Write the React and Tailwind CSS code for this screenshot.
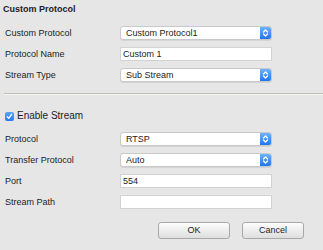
import React from "react";

function Chevrons() {
  return (
    <svg width="7" height="10" viewBox="0 0 7 10" fill="none" stroke="white" strokeWidth="1.2" strokeLinecap="round" strokeLinejoin="round">
      <path d="M1.5 4 L3.5 2 L5.5 4" />
      <path d="M1.5 6 L3.5 8 L5.5 6" />
    </svg>
  );
}

function Select({ value }) {
  return (
    <div className="w-[152px] h-[14px] flex items-stretch rounded-[3px] bg-white border border-[#c9c9c9] shadow-[0_1px_0_rgba(0,0,0,0.08)] overflow-hidden">
      <div className="flex-1 pl-[5px] flex items-center leading-none">{value}</div>
      <div className="w-[11px] flex items-center justify-center bg-gradient-to-b from-[#6fb2fb] to-[#1f74ef]">
        <Chevrons />
      </div>
    </div>
  );
}

function Input({ value }) {
  return (
    <div className="w-[152px] h-[14px] flex items-center bg-white border border-[#d2d2d2] pl-[2px] leading-none">
      {value}
    </div>
  );
}

function Row({ label, children }) {
  return (
    <div className="h-[14px] flex items-center">
      <div className="w-[115px] leading-none">{label}</div>
      {children}
    </div>
  );
}

export default function App() {
  return (
    <div
      className="w-[323px] h-[250px] bg-[#e6e6e6] text-[9px] text-[#1c1c1c] overflow-hidden flex flex-col"
      style={{ fontFamily: '"Liberation Sans", Arial, sans-serif' }}
    >
      <div className="pl-[3px] pt-[3px] h-[15px] leading-[12px] font-bold">Custom Protocol</div>
      <div className="mt-[11px] flex flex-col gap-[7px] pl-[5px]">
        <Row label="Custom Protocol"><Select value="Custom Protocol1" /></Row>
        <Row label="Protocol Name"><Input value="Custom 1" /></Row>
        <Row label="Stream Type"><Select value="Sub Stream" /></Row>
      </div>
      <div className="mt-[11px] ml-[4px] h-px bg-[#bfbfb6]" />
      <div className="ml-[4px] h-px bg-[#f4f4f0]" />
      <div className="mt-[14px] pl-[5px] h-[14px] flex items-center gap-[3px]">
        <div className="w-[9px] h-[9px] rounded-[2px] bg-gradient-to-b from-[#5aa6fa] to-[#2a78ef] flex items-center justify-center">
          <svg width="7" height="7" viewBox="0 0 7 7" fill="none" stroke="white" strokeWidth="1.3" strokeLinecap="round" strokeLinejoin="round">
            <path d="M1.3 3.8 L2.8 5.4 L5.6 1.3" />
          </svg>
        </div>
        <span className="text-[10px] leading-none">Enable Stream</span>
      </div>
      <div className="mt-[9px] flex flex-col gap-[7px] pl-[5px]">
        <Row label="Protocol"><Select value="RTSP" /></Row>
        <Row label="Transfer Protocol"><Select value="Auto" /></Row>
        <Row label="Port"><Input value="554" /></Row>
        <Row label="Stream Path"><Input value="" /></Row>
      </div>
      <div className="mt-[13px] flex justify-end gap-[12px] pr-[19px]">
        <button className="w-[72px] h-[17px] rounded-[3px] border border-[#a9a9a9] bg-gradient-to-b from-[#fdfdfd] to-[#dedede] text-[9px] leading-none text-[#1c1c1c]">OK</button>
        <button className="w-[62px] h-[17px] rounded-[3px] border border-[#a9a9a9] bg-gradient-to-b from-[#fdfdfd] to-[#dedede] text-[9px] leading-none text-[#1c1c1c]">Cancel</button>
      </div>
    </div>
  );
}
